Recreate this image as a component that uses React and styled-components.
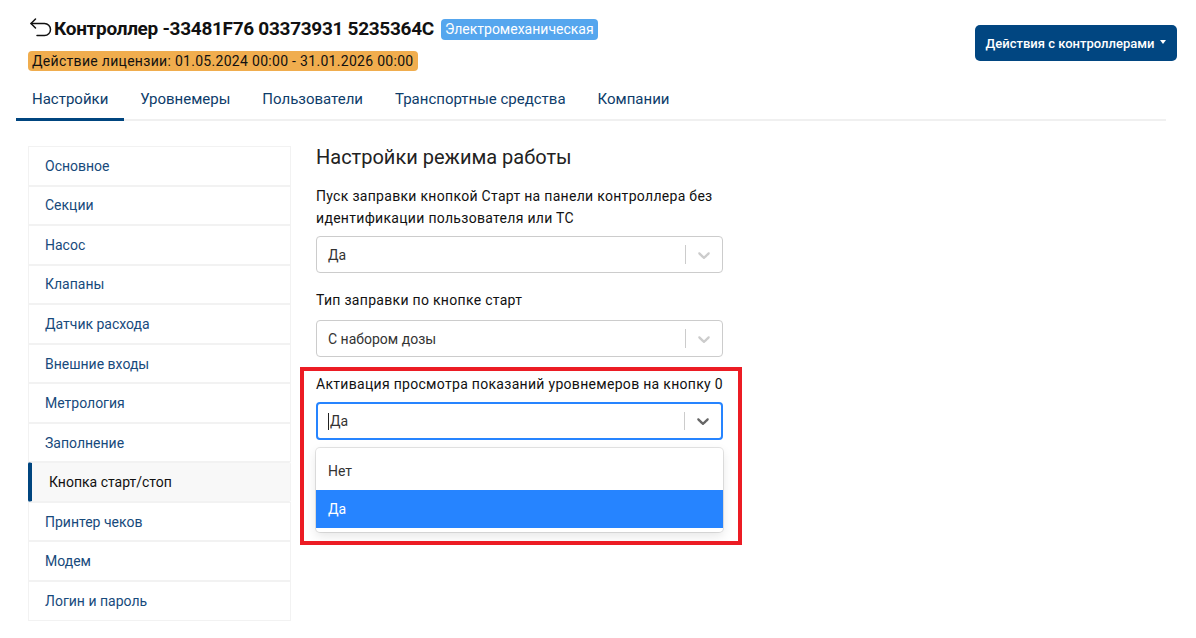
import React from "react";
import styled, { createGlobalStyle } from "styled-components";

const GlobalStyle = createGlobalStyle`
  html, body {
    margin: 0;
    padding: 0;
    background: #fff;
  }
  body {
    font-family: Roboto, "Noto Sans", sans-serif;
    color: #212529;
  }
`;

const Page = styled.div`
  width: 1196px;
  height: 638px;
  padding: 15px 19px 0 16px;
  box-sizing: border-box;
  overflow: hidden;
`;

const Header = styled.header`
  display: flex;
  justify-content: space-between;
  align-items: flex-start;
`;

const HeaderInfo = styled.div`
  display: flex;
  flex-direction: column;
  gap: 10px;
  padding-left: 12px;
`;

const TitleRow = styled.div`
  display: flex;
  align-items: center;
  height: 26px;
`;

const BackButton = styled.span`
  display: inline-flex;
  width: 24px;
  height: 24px;
  margin: 0 1px;
  color: #111;
`;

const Title = styled.h1`
  margin: 0;
  font-size: 19px;
  font-weight: 700;
  letter-spacing: -0.3px;
  color: #111;
`;

const Badge = styled.span`
  display: inline-block;
  margin-left: ${(p) => p.$ml || "0"};
  margin-top: ${(p) => p.$mt || "0"};
  padding: 0 4px;
  line-height: ${(p) => p.$lh || "21px"};
  font-size: 14px;
  letter-spacing: ${(p) => p.$ls || "0"};
  border-radius: 4px;
  background: ${(p) => p.$bg};
  color: ${(p) => p.$fg};
  align-self: ${(p) => p.$align || "flex-start"};
`;

const ActionButton = styled.button`
  margin-top: 10px;
  width: 202px;
  height: 36px;
  border: none;
  border-radius: 5px;
  background: #014681;
  color: #fff;
  font-family: Roboto, sans-serif;
  font-size: 13px;
  font-weight: 500;
  display: flex;
  align-items: center;
  justify-content: center;
  gap: 6px;
  &::after {
    content: "";
    border-top: 4px solid #fff;
    border-left: 3.5px solid transparent;
    border-right: 3.5px solid transparent;
    margin-top: -2px;
  }
`;

const Tabs = styled.nav`
  display: flex;
  margin-top: 6px;
  border-bottom: 2px solid #f0f0f0;
  width: 1150px;
`;

const Tab = styled.div`
  padding: 12px 16px 9px;
  font-size: 15px;
  color: #0d3c6a;
  border-bottom: 3px solid ${(p) => (p.$active ? "#00457f" : "transparent")};
  margin-bottom: -2px;
  line-height: 20px;
`;

const Body = styled.div`
  display: flex;
  gap: 25px;
  margin-top: 24px;
  padding-left: 12px;
`;

const Sidebar = styled.ul`
  list-style: none;
  margin: 1px 0 0;
  padding: 0;
  width: 263px;
  flex-shrink: 0;
`;

const SideItem = styled.li`
  height: 39.55px;
  box-sizing: border-box;
  border: 1px solid #f2f2f2;
  border-left: ${(p) => (p.$active ? "4px solid #00457f" : "1px solid #f2f2f2")};
  border-radius: ${(p) => (p.$active ? "2px" : "0")};
  background: ${(p) => (p.$active ? "#f8f8f8" : "#fff")};
  color: ${(p) => (p.$active ? "#111" : "#174a7c")};
  padding-left: ${(p) => (p.$active ? "17px" : "16px")};
  display: flex;
  align-items: center;
  font-size: 14px;
`;

const Content = styled.section`
  width: 407px;
`;

const Heading = styled.h2`
  margin: 0 0 16px;
  font-size: 20px;
  font-weight: 400;
  line-height: 24px;
  color: #222;
`;

const Field = styled.div`
  position: relative;
  margin-bottom: 16px;
`;

const Label = styled.label`
  display: block;
  font-size: 14px;
  line-height: 22px;
  letter-spacing: 0.3px;
  margin-bottom: ${(p) => p.$mb || "7px"};
  color: #111;
`;

const Select = styled.div`
  height: ${(p) => (p.$focused ? "38px" : "37px")};
  box-sizing: border-box;
  border: ${(p) => (p.$focused ? "2px solid #2684ff" : "1px solid #cccccc")};
  border-radius: 4px;
  display: flex;
  align-items: center;
  padding-left: ${(p) => (p.$focused ? "10px" : "11px")};
  font-size: 14px;
  color: #333;
`;

const Value = styled.div`
  flex: 1;
  display: flex;
  align-items: center;
`;

const Caret = styled.span`
  display: inline-block;
  width: 1px;
  height: 17px;
  background: #222;
  margin-right: 1px;
`;

const Separator = styled.span`
  width: 1px;
  align-self: stretch;
  margin: 8px 0;
  background: #ccc;
`;

const Indicator = styled.span`
  display: flex;
  padding: 0 8px;
  color: ${(p) => (p.$focused ? "#666" : "#ccc")};
`;

const Menu = styled.div`
  margin-top: 8px;
  border-radius: 4px;
  box-shadow: 0 0 0 1px rgba(0, 0, 0, 0.1), 0 4px 11px rgba(0, 0, 0, 0.1);
  padding: 4px 0;
  background: #fff;
`;

const Option = styled.div`
  height: 38px;
  display: flex;
  align-items: center;
  padding-left: 12px;
  font-size: 14px;
  background: ${(p) => (p.$selected ? "#2684ff" : "#fff")};
  color: ${(p) => (p.$selected ? "#fff" : "#333")};
`;

const Highlight = styled.div`
  position: absolute;
  left: -16px;
  top: -6px;
  right: -19px;
  bottom: -13px;
  border: 4px solid #ec1c24;
  pointer-events: none;
`;

const Chevron = () => (
  <svg width="20" height="20" viewBox="0 0 20 20" fill="currentColor">
    <path d="M4.516 7.548c0.436-0.446 1.043-0.481 1.576 0l3.908 3.747 3.908-3.747c0.533-0.481 1.141-0.446 1.574 0 0.436 0.445 0.408 1.197 0 1.615-0.406 0.418-4.695 4.502-4.695 4.502-0.217 0.223-0.502 0.335-0.787 0.335s-0.57-0.112-0.789-0.335c0 0-4.287-4.084-4.695-4.502s-0.436-1.17 0-1.615z" />
  </svg>
);

const BackIcon = () => (
  <svg width="24" height="24" viewBox="0 0 24 24" fill="none" stroke="currentColor" strokeWidth="1.5" strokeLinecap="round" strokeLinejoin="round">
    <path d="M6.5 3 2 7.5 6.5 12" />
    <path d="M2 7.5h13.5a6 6 0 0 1 0 12H8" />
  </svg>
);

const SelectBox = ({ value, focused }) => (
  <Select $focused={focused}>
    <Value>
      {focused && <Caret />}
      {value}
    </Value>
    <Separator />
    <Indicator $focused={focused}>
      <Chevron />
    </Indicator>
  </Select>
);

const tabs = ["Настройки", "Уровнемеры", "Пользователи", "Транспортные средства", "Компании"];

const sections = [
  "Основное",
  "Секции",
  "Насос",
  "Клапаны",
  "Датчик расхода",
  "Внешние входы",
  "Метрология",
  "Заполнение",
  "Кнопка старт/стоп",
  "Принтер чеков",
  "Модем",
  "Логин и пароль",
];

export default function App() {
  return (
    <Page>
      <GlobalStyle />
      <Header>
        <HeaderInfo>
          <TitleRow>
            <BackButton>
              <BackIcon />
            </BackButton>
            <Title>Контроллер -33481F76 03373931 5235364C</Title>
            <Badge $bg="#55a6ee" $fg="#fff" $ml="7px" $mt="2px" $align="center">
              Электромеханическая
            </Badge>
          </TitleRow>
          <Badge $bg="#f0ad4e" $fg="#111" $lh="20px" $ls="0.3px">
            Действие лицензии: 01.05.2024 00:00 - 31.01.2026 00:00
          </Badge>
        </HeaderInfo>
        <ActionButton>Действия с контроллерами</ActionButton>
      </Header>

      <Tabs>
        {tabs.map((t, i) => (
          <Tab key={t} $active={i === 0}>
            {t}
          </Tab>
        ))}
      </Tabs>

      <Body>
        <Sidebar>
          {sections.map((s) => (
            <SideItem key={s} $active={s === "Кнопка старт/стоп"}>
              {s}
            </SideItem>
          ))}
        </Sidebar>
        <Content>
          <Heading>Настройки режима работы</Heading>
          <Field>
            <Label>
              Пуск заправки кнопкой Старт на панели контроллера без идентификации пользователя или ТС
            </Label>
            <SelectBox value="Да" />
          </Field>
          <Field>
            <Label $mb="9px">Тип заправки по кнопке старт</Label>
            <SelectBox value="С набором дозы" />
          </Field>
          <Field>
            <Label>Активация просмотра показаний уровнемеров на кнопку 0</Label>
            <SelectBox value="Да" focused />
            <Menu>
              <Option>Нет</Option>
              <Option $selected>Да</Option>
            </Menu>
            <Highlight />
          </Field>
        </Content>
      </Body>
    </Page>
  );
}
